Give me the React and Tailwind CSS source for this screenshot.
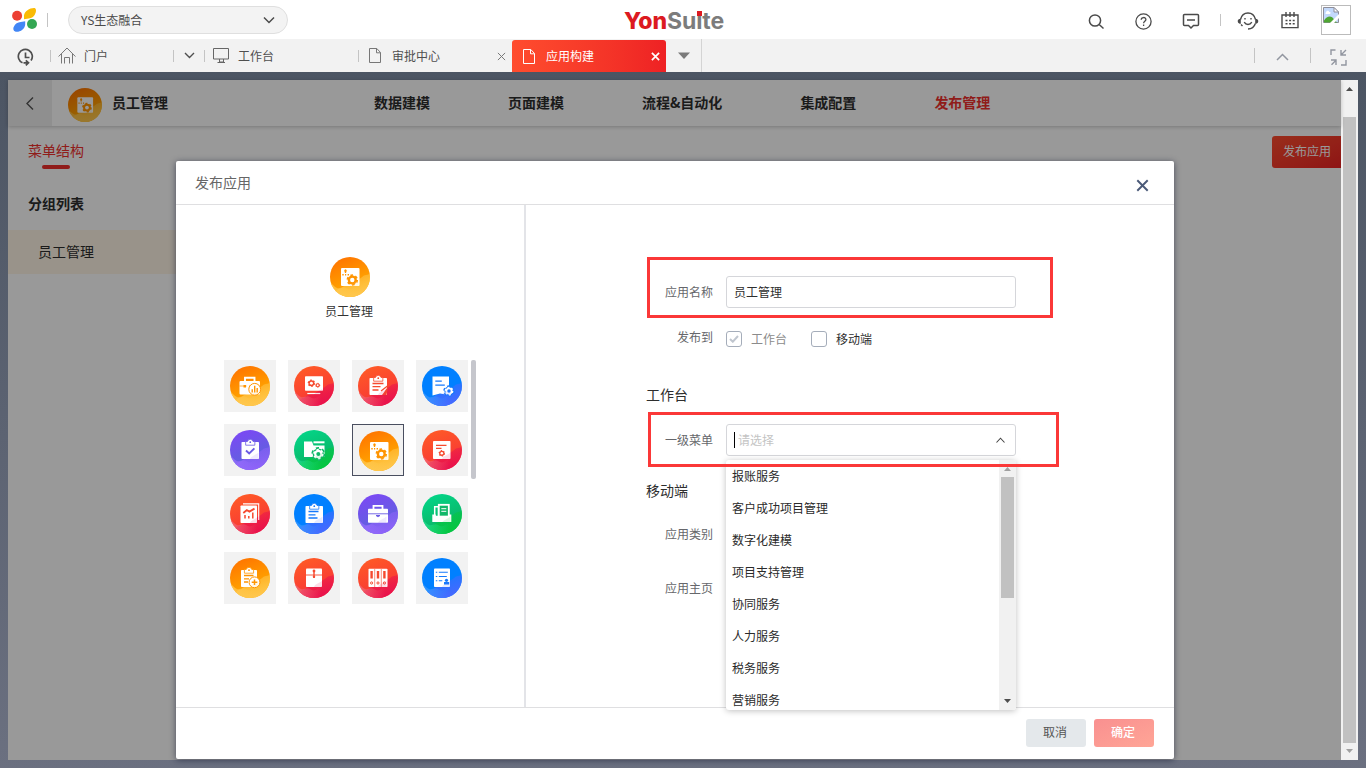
import React from "react";

const SKINS = {
  orange: ["#ff7400", "#ffa800", "#ffc850"],
  red: ["#ff5a26", "#f83a35", "#e8104e"],
  blue: ["#0080ff", "#0080ff", "#4a68ff"],
  purple: ["#7c48f5", "#5f62dd", "#9062fa"],
  green: ["#03d588", "#0bb566", "#05c83e"],
};

const LEFT_WAVE = { orange: "#ffcb55", red: "#f0687a", blue: "#3d9aff", purple: "#9a70ff", green: "#22dd8e" };

function Gear({ x, y, r, fill, hole }) {
  const c = 2 * Math.PI * r;
  return (
    <g>
      <circle cx={x} cy={y} r={r} fill={fill} />
      <circle cx={x} cy={y} r={r} fill="none" stroke={fill} strokeWidth={r * 0.5} strokeDasharray={`${c / 12} ${c / 12}`} />
      <circle cx={x} cy={y} r={r * 0.48} fill={hole} />
    </g>
  );
}

function Board({ children, x = 11.5, w = 17.5, y = 12 }) {
  const c = x + w / 2;
  return (
    <g>
      <rect x={x} y={y} width={w} height="17" rx="0.8" fill="#fff" />
      <path d={`M${c - 4.6} ${y + 3.2}v-3.700h1.800a2.900 2.900 0 0 1 5.600 0h1.800v3.700z`} fill="#fff" stroke="currentColor" strokeWidth="0.8" />
      <circle cx={c} cy={y + 0.2} r="0.9" fill="currentColor" />
      {children}
    </g>
  );
}

const line = { fill: "none", stroke: "currentColor", strokeWidth: 1.3 };

const GLYPHS = {
  caseChart: (
    <g>
      <path d="M15 15.5v-3.700h9.500v3.700" fill="none" stroke="#fff" strokeWidth="1.900" />
      <rect x="9.500" y="15" width="20.500" height="13.500" rx="1" fill="#fff" />
      <path d="M9.500 20h7M19 20h5" {...line} strokeWidth="0.700" />
      <rect x="13.500" y="19" width="2.500" height="2.500" fill="currentColor" />
      <circle cx="24.700" cy="23.300" r="5.900" fill="#fff" stroke="currentColor" strokeWidth="1" />
      <path d="M22.200 26.400v-3.200M24.700 26.400v-6.600M27.200 26.400v-4.400" {...line} strokeWidth="1.400" />
    </g>
  ),
  screen: (
    <g>
      <rect x="11" y="10.300" width="18" height="14.400" rx="0.800" fill="#fff" />
      <Gear x={17.400} y={17.200} r={3} fill="currentColor" hole="#fff" />
      <Gear x={23.700} y={19.300} r={2} fill="currentColor" hole="#fff" />
      <path d="M13.300 27.500h13" stroke="#fff" strokeWidth="1.200" />
    </g>
  ),
  boardEdit: (
    <Board>
      <path d="M14.500 17.500h11M14.500 20.700h8M14.500 24h6" {...line} />
      <path d="M30 20.500 25.500 27 24 29h4.500z" fill="currentColor" />
      <path d="m29.500 20-6.500 5" {...line} />
    </Board>
  ),
  docGear: (
    <g>
      <path d="M10.500 10.500h16.500v18H24l-6-1-7.500 2z" fill="#fff" />
      <path d="M13.300 15.200h6.500M13.300 19.200h9.500" {...line} />
      <Gear x={27} y={25} r={4.600} fill="currentColor" hole="currentColor" />
      <Gear x={27} y={25} r={3.500} fill="#fff" hole="currentColor" />
    </g>
  ),
  boardCheck: (
    <Board>
      <path d="m16 20.500 3.200 3 5.200-5.200" {...line} strokeWidth="1.900" />
    </Board>
  ),
  folderGear: (
    <g>
      <path d="M10 27V11.500h8l1.500 4h11V27z" fill="#fff" />
      <path d="M19.500 12.300h11" stroke="#fff" strokeWidth="2" />
      <Gear x={24.300} y={24} r={5.600} fill="currentColor" hole="currentColor" />
      <Gear x={24.300} y={24} r={4.200} fill="#fff" hole="currentColor" />
    </g>
  ),
  panelGear: (
    <g>
      <rect x="11" y="11" width="18.500" height="18" rx="1" fill="#fff" />
      <path d="M15.500 12.200a1.500 1.500 0 0 1 .5 2.800l.3 1h-1.600l.3-1a1.500 1.500 0 0 1 .5-2.800zM12.300 17h1.400v1.600h-1.400zM15 17h1.200v1.600H15zM17.600 17H19v1.600h-1.400z" fill="currentColor" />
      <Gear x={22.300} y={23} r={4.600} fill="currentColor" hole="#fff" />
    </g>
  ),
  docSmallGear: (
    <g>
      <rect x="11" y="11" width="17.500" height="18" rx="0.800" fill="#fff" />
      <path d="M14 15.300h10.500M14 18.300h5.500" {...line} />
      <Gear x={19.800} y={23.300} r={2.600} fill="currentColor" hole="#fff" />
    </g>
  ),
  sheets: (
    <g>
      <path d="M13 9.900h15.700V26" fill="none" stroke="#fff" strokeWidth="1.100" />
      <rect x="10.500" y="11.500" width="16.500" height="17.500" rx="0.800" fill="#fff" />
      <path d="m13.300 19 3.500-3 2.600 1.600 5.100-3" {...line} strokeWidth="1.800" />
      <path d="M15 24.500v-3.500M18.800 24.500V22M22.800 24.500v-6" {...line} strokeWidth="1.500" />
    </g>
  ),
  boardLines: (
    <Board>
      <path d="M14.500 17.500h10M14.500 20.800h7M14.500 24h9" {...line} />
    </Board>
  ),
  briefcase: (
    <g>
      <path d="M15.500 15.500v-3.700h9v3.700" fill="none" stroke="#fff" strokeWidth="1.800" />
      <rect x="10" y="14.700" width="20" height="14" rx="0.800" fill="#fff" />
      <path d="M10 19.800h20" {...line} strokeWidth="0.900" />
      <path d="M18 21h4v1l-2 1.200-2-1.200z" fill="currentColor" />
    </g>
  ),
  tray: (
    <g>
      <path d="M12.700 22v-9.300h3.800v9.300" fill="none" stroke="#fff" strokeWidth="1.500" />
      <rect x="16.800" y="10.800" width="10" height="12" fill="currentColor" stroke="#fff" strokeWidth="1.800" />
      <path d="M19.300 14.700h5M19.300 17.300h5" stroke="#fff" strokeWidth="1" />
      <path d="M10.300 20.500h3.500v1.200h13v-1.200h2.500v7.500h-19z" fill="#fff" />
    </g>
  ),
  boardPlus: (
    <Board x={11} w={16}>
      <path d="M14 17.500h9.500M14 20.800h5M14 24h4" {...line} />
      <circle cx="24.500" cy="24.300" r="5.400" fill="#fff" stroke="currentColor" strokeWidth="1" />
      <path d="M21.700 24.300h5.600M24.500 21.500v5.600" {...line} strokeWidth="1.500" />
    </Board>
  ),
  box: (
    <g>
      <rect x="12" y="10.500" width="16" height="18.500" rx="0.800" fill="#fff" />
      <path d="M12 17h16" {...line} strokeWidth="0.900" />
      <path d="M20 12.500v7.500" {...line} strokeWidth="1.400" />
      <circle cx="20" cy="13" r="1.400" fill="currentColor" />
      <circle cx="20" cy="18.700" r="1.200" fill="currentColor" />
    </g>
  ),
  binders: (
    <g>
      <rect x="10.500" y="10.800" width="19" height="18.200" rx="0.800" fill="#fff" />
      <path d="M16.700 11v18M23.300 11v18" {...line} strokeWidth="0.600" />
      <path d="M13.600 13v7.500M20 13v7.500M26.400 13v7.500" {...line} strokeWidth="2.400" />
      <circle cx="13.600" cy="25" r="1.100" {...line} strokeWidth="1" />
      <circle cx="20" cy="25" r="1.100" {...line} strokeWidth="1" />
      <circle cx="26.400" cy="25" r="1.100" {...line} strokeWidth="1" />
    </g>
  ),
  listUser: (
    <g>
      <rect x="12" y="10.500" width="16" height="18.500" rx="0.800" fill="#fff" />
      <path d="M13.800 14.300h1.500M13.800 18.500h1.500M13.800 22.700h1.500M16.800 14.300h9M16.800 18.500h8M16.800 22.700h3.500" {...line} strokeWidth="1.100" />
      <circle cx="24.500" cy="22.300" r="1.600" fill="currentColor" />
      <path d="M22 26.500v-2.500h5.200v2.500z" fill="currentColor" />
    </g>
  ),
};

const GLYPH_COLORS = { orange: "#ff9400", red: "#f64a2f", blue: "#1679fb", purple: "#6a5be4", green: "#10b869" };

function AppIcon({ skin, glyph, size = 40, id }) {
  const [from, to, wave] = SKINS[skin];
  return (
    <svg width={size} height={size} viewBox="0 0 40 40" color={GLYPH_COLORS[skin]} className="block shrink-0">
      <defs>
        <linearGradient id={id} x1="0.25" y1="0" x2="0.65" y2="1">
          <stop offset="0" stopColor={from} />
          <stop offset="0.8" stopColor={to} />
        </linearGradient>
        <clipPath id={id + "c"}>
          <circle cx="20" cy="20" r="20" />
        </clipPath>
        <linearGradient id={id + "w"} x1="0" y1="0" x2="0.5" y2="1">
          <stop offset="0" stopColor={wave} stopOpacity="0.15" />
          <stop offset="1" stopColor={wave} stopOpacity="0.95" />
        </linearGradient>
        <linearGradient id={id + "v"} x1="0" y1="0" x2="0.8" y2="0">
          <stop offset="0" stopColor={LEFT_WAVE[skin]} stopOpacity="0.85" />
          <stop offset="1" stopColor={LEFT_WAVE[skin]} stopOpacity="0" />
        </linearGradient>
      </defs>
      <g clipPath={`url(#${id}c)`}>
        <rect width="40" height="40" fill={`url(#${id})`} />
        <path d="M8 32c4 0 5-4 10-4 5-1 7-4 11-6 3-1 4-4 7-4 2 0 3-1 4-2v24H0z" fill={`url(#${id}w)`} />
        <path d="M0 26c3 1 4 4 7 5s6-2 9 0 5 2 9-1c3-1 6-1 9-3v13H0z" fill={`url(#${id}v)`} />
      </g>
      {GLYPHS[glyph]}
      <path d="M20 29c1-3 4-3 8.500-6.500V29z" fill={wave} opacity="0.14" />
    </svg>
  );
}

const TILES = [
  ["orange", "caseChart"], ["red", "screen"], ["red", "boardEdit"], ["blue", "docGear"],
  ["purple", "boardCheck"], ["green", "folderGear"], ["orange", "panelGear"], ["red", "docSmallGear"],
  ["red", "sheets"], ["blue", "boardLines"], ["purple", "briefcase"], ["green", "tray"],
  ["orange", "boardPlus"], ["red", "box"], ["red", "binders"], ["blue", "listUser"],
];

const OPTIONS = ["报账服务", "客户成功项目管理", "数字化建模", "项目支持管理", "协同服务", "人力服务", "税务服务", "营销服务"];

function Svg({ w, h, vb, children, className = "", sw = 1.5 }) {
  return (
    <svg width={w} height={h} viewBox={vb || `0 0 ${w} ${h}`} fill="none" stroke="currentColor" strokeWidth={sw} className={`block shrink-0 ${className}`}>
      {children}
    </svg>
  );
}

function Close({ size, sw, className }) {
  return (
    <Svg w={size} h={size} vb="0 0 10 10" sw={sw} className={className}>
      <path d="m1 1 8 8M9 1 1 9" />
    </Svg>
  );
}

function PageIcon({ className }) {
  return (
    <Svg w={12} h={15} sw={1} className={className}>
      <path d="M.5.5h7.300l3.700 4v10H.5zM7.500.5v4.300h4" />
    </Svg>
  );
}

function Divider({ className }) {
  return <div className={`h-3 w-px shrink-0 bg-[#c4c4c4] ${className || ""}`} />;
}

function TopBar() {
  return (
    <header className="relative flex h-[39px] shrink-0 items-center bg-white text-[#4a4a4a]">
      <svg width="26" height="25" viewBox="0 0 26 25" className="ml-[12px] block">
        <circle cx="5.1" cy="8.8" r="5" fill="#ec4034" />
        <path d="M12 12.3V8.5C12.5 4.3 17.5 1 22 1c2 0 2.400 2.400 1.700 4.400-1 3.800-4 5.800-7 6.200z" fill="#fabb05" />
        <circle cx="20" cy="17" r="5" fill="#34a753" />
        <path d="M13.200 14.300v3.200c-.3 4.500-4.500 7.300-8.500 7.300-3 0-4-2.500-3-4.800 1.500-3.400 4-4.600 7-5z" fill="#4286f5" />
      </svg>
      <Divider className="ml-[9px] h-[14px]" />
      <div className="ml-5 flex h-7 w-[220px] items-center justify-between rounded-full border border-[#dfdfdf] bg-[#f3f3f3] pl-3 pr-[12px]">
        <span className="text-[12px] leading-none">YS生态融合</span>
        <Svg w={12} h={8} sw={1.5}><path d="m1 1.500 5 5 5-5" /></Svg>
      </div>
      <div className="absolute left-[624px] top-[8px] flex font-['Inter'] text-[23px] font-extrabold leading-[26px] tracking-[-0.1px]">
        <span className="text-[#dc1a21]">Yon</span>
        <span className="font-bold text-[#7c7c7c]">Su</span>
        <span className="relative font-bold text-[#7c7c7c]">i<i className="absolute left-[1px] top-[3px] h-[5px] w-[5px] bg-[#dc1a21]" /></span>
        <span className="font-bold text-[#7c7c7c]">te</span>
      </div>
      <div className="ml-auto flex items-center pr-[15px]">
        <Svg w={16} h={16} className="mr-[31px] mt-[4px]"><circle cx="7" cy="6.500" r="5.600" /><path d="m11.200 10.500 4.300 4" /></Svg>
        <Svg w={17} h={17} sw={1.300} className="mr-[30px] mt-[3px]"><circle cx="8.500" cy="8.500" r="7.600" /><path d="M6.200 6.800c0-3 4.700-3 4.700-.2 0 1.700-2.300 1.800-2.300 3.700M8.600 11.500V13" /></Svg>
        <Svg w={18} h={17} className="mr-[20px] mt-[4px]"><path d="M2.500 1.500h13a1 1 0 0 1 1 1v9a1 1 0 0 1-1 1h-4L9 15l-2.500-2.500h-4a1 1 0 0 1-1-1v-9a1 1 0 0 1 1-1zM5 7h8" /></Svg>
        <Divider className="mr-[16px]" />
        <Svg w={22} h={18} sw={1.400} className="mr-[22px] mt-[2px]">
          <path d="M3.500 7.500C4.500 3.500 7.500 1 11 1s6.500 2.500 7.500 6.500M18.400 11.500c-1.200 3.500-4 5.500-7.400 5.500M4 12.500 5.500 14M7.200 10.200c1.800 3 5.800 3 7.600 0" />
          <path d="M3.800 6.800c-2.600 0-3.400 1.500-3 3 .3 1.400 1.500 2 3 2zM18.200 6.800c2.600 0 3.400 1.500 3 3-.3 1.400-1.500 2-3 2z" fill="currentColor" stroke="none" />
          <path d="M8 6v1.500M14 6v1.500" />
        </Svg>
        <Svg w={18} h={17} sw={1.400} className="mr-[22px] mt-px">
          <path d="M1 3h16v12.600H1zM5 0v5M9 0v5M13 0v5" />
          <path d="M4.500 8.500h9.500M4.500 11.800h9.500" strokeDasharray="2 1.600" />
        </Svg>
        <div className="mt-px h-[30px] w-[30px] border border-[#bbb] bg-white p-px">
          <svg width="16" height="16" viewBox="0 0 16 16" className="block">
            <path d="M.5.500h10.500l4.500 4.500v10.500H.500z" fill="#c3d9fb" stroke="#8e8e9a" />
            <path d="M3 5.500c0-2 3-2.200 3.200-.5 1.800-.3 2 1.800.5 1.900H3.200C2.200 6.800 2 5.600 3 5.500z" fill="#fff" />
            <path d="M1 15.500v-2c3-5 8-5 10-1l3 3z" fill="#4ea632" />
            <path d="M11 .500v4.500h4.500z" fill="#fff" stroke="#8e8e9a" />
            <path d="m16 7-9 9h4l5-5z" fill="#fff" />
          </svg>
        </div>
      </div>
    </header>
  );
}

function TabBar() {
  return (
    <nav className="flex h-[33px] shrink-0 items-center bg-[#f2f2f2] text-[12px] text-[#4f4f4f]">
      <Svg w={17} h={19} sw={1.700} className="ml-[17px] mt-[4px]">
        <path d="M5.500 14.800A7 7 0 1 1 14 12.500M8.500 4.500v5h4M6.500 14.800h4.500M8.800 12.300l2.700 2.500-2.700 2.500" />
      </Svg>
      <Divider className="ml-[16px]" />
      <Svg w={18} h={17} sw={1} className="ml-[7px] text-[#777]">
        <path d="M.6 9.500 9 1l8.400 8.500M3.500 7v9.500M14.500 7v9.500M6.500 16.500v-6h5v6" />
      </Svg>
      <span className="ml-[8px] w-[89px]">门户</span>
      <Divider />
      <Svg w={11} h={7} className="ml-[10px] mr-[9px]" sw={1.400}><path d="m1 1 4.500 4.500L10 1" /></Svg>
      <Divider />
      <Svg w={17} h={15} sw={1} className="ml-[8px] text-[#666]"><path d="M.500.500h15v10.500H.500zM6.500 11v3h4v-3M4.500 14.500h7.500" /></Svg>
      <span className="ml-[8px] w-[120px]">工作台</span>
      <Divider />
      <PageIcon className="ml-[10px] text-[#777]" />
      <span className="ml-[11px] w-[105px]">审批中心</span>
      <Close size={9} sw={1.100} className="mr-[6px] mt-px text-[#777]" />
      <div className="mt-px flex h-8 w-[154px] items-center rounded-t-[3px] bg-gradient-to-r from-[#ff4c2e] to-[#ee2124] text-white">
        <PageIcon className="ml-[11px]" />
        <span className="ml-[11px] w-[105px]">应用构建</span>
        <Close size={9} sw={1.900} className="mt-px" />
      </div>
      <div className="flex h-full w-9 items-center justify-center border-r border-[#d4d4d4]">
        <svg width="12" height="7" className="block"><path d="M0 .500h12L6 7z" fill="#7b7b7b" /></svg>
      </div>
      <div className="ml-auto flex items-center pr-[19px] text-[#9296a0]">
        <Divider className="h-[15px]" />
        <Svg w={13} h={8} className="ml-[21px] mr-[21px] mt-[2px]"><path d="m1 7 5.500-5.500L12 7" /></Svg>
        <Divider className="h-[15px]" />
        <Svg w={17} h={17} sw={1.400} className="ml-[19px] mt-[4px]">
          <path d="M1 6V1h4.500M16 1l-4.500 4.500M11 1v5h5M1 11h5v5M1.500 15.700l4.500-4.500M11 16h5v-5" />
        </Svg>
      </div>
    </nav>
  );
}

function Workspace() {
  return (
    <div className="flex h-full flex-col bg-white">
      <div className="flex h-[46px] shrink-0 items-center text-[14px] font-bold text-[#2e2e2e] shadow-[0_1px_4px_rgba(0,0,0,0.22)]">
        <div className="flex h-full w-11 items-center justify-center bg-[#efefef] text-[#555]">
          <Svg w={8} h={13} sw={1.400}><path d="m7 .500-6 6 6 6" /></Svg>
        </div>
        <div className="ml-4 mt-[3px]"><AppIcon skin="orange" glyph="panelGear" size={34} id="head" /></div>
        <span className="mb-[2px] ml-[10px] w-[263px]">员工管理</span>
        <div className="mb-[2px] flex gap-[78px] whitespace-nowrap">
          <span className="-ml-px">数据建模</span>
          <span>页面建模</span>
          <span>流程&amp;自动化</span>
          <span>集成配置</span>
          <span className="text-[#f0302c]">发布管理</span>
        </div>
      </div>
      <div className="flex flex-1 justify-between text-[14px]">
        <div className="w-[168px] leading-[20px] text-[#2e2e2e]">
          <div className="ml-5 mt-[14px] w-14 text-[#f0302c]">菜单结构
            <div className="mx-auto mt-[5px] h-1 w-7 rounded-full bg-[#f0302c]" />
          </div>
          <div className="ml-5 mt-[24px] font-bold">分组列表</div>
          <div className="mt-[17px] flex h-11 items-center bg-[#fff6e6] pb-[2px] pl-[30px]">员工管理</div>
        </div>
        <div className="mt-[10px] flex h-8 w-[69px] items-center whitespace-nowrap rounded-l-[3px] bg-gradient-to-br from-[#ff4c2e] to-[#ee2124] pb-[2px] pl-[11px] text-[12px] text-white">发布应用</div>
      </div>
    </div>
  );
}

function ScrollArrow({ up, className }) {
  return (
    <svg width="7" height="4" className={`block ${className}`}>
      <path d={up ? "M0 4 3.500 0 7 4z" : "M0 0h7L3.500 4z"} fill="currentColor" />
    </svg>
  );
}

function IconPicker() {
  return (
    <div className="flex w-[350px] shrink-0 flex-col items-center border-r-2 border-[#e3e4e8] pt-[52px]">
      <AppIcon skin="orange" glyph="panelGear" id="chosen" />
      <span className="mr-[2px] mt-[5px] text-[12px] leading-[18px] text-[#333]">员工管理</span>
      <div className="mt-10 flex w-[252px] justify-between">
        <div className="grid w-[244px] grid-cols-4 gap-3">
          {TILES.map(([skin, glyph], i) => (
            <div key={i} className={`h-[52px] w-[52px] bg-[#f2f2f2] pl-[6px] pt-[6px] ${i === 6 ? "border border-[#4a4f60]" : ""}`}>
              <AppIcon skin={skin} glyph={glyph} id={`t${i}`} />
            </div>
          ))}
        </div>
        <div className="h-[119px] w-[5px] rounded-[2px] bg-[#c5c6cc]" />
      </div>
    </div>
  );
}

function Label({ children, className = "" }) {
  return <span className={`w-[189px] pr-[2px] text-right text-[12px] leading-[18px] text-[#66676b] ${className}`}>{children}</span>;
}

function PublishForm() {
  return (
    <div className="flex-1 text-[12px] text-[#2e2e2e]">
      <div className="mt-[71px] flex h-8 items-center">
        <Label>应用名称</Label>
        <div className="ml-[11px] flex h-8 w-[290px] items-center rounded-[3px] border border-[#d5d6da] pl-[7px]">员工管理</div>
      </div>
      <div className="mt-[19px] flex h-[20px] items-center">
        <Label>发布到</Label>
        <div className="ml-[11px] mt-[3px] flex items-center">
          <div className="flex h-4 w-4 items-center justify-center rounded-[3px] border border-[#a5adba]">
            <Svg w={10} h={8} sw={2} className="text-[#c0c6cf]"><path d="m1 4 2.800 2.700L9 1" /></Svg>
          </div>
          <span className="ml-2 w-[61px] pl-px text-[#8b8b8b]">工作台</span>
          <div className="h-4 w-4 rounded-[3px] border border-[#a5adba]" />
          <span className="ml-2 pl-px">移动端</span>
        </div>
      </div>
      <div className="ml-[120px] mt-[37px] text-[14px] leading-[20px]">工作台</div>
      <div className="mt-[20px] flex h-8 items-center">
        <Label>一级菜单</Label>
        <div className="ml-[11px] flex h-8 w-[290px] items-center rounded-[3px] border border-[#d5d6da] pl-[7px] pr-[10px]">
          <div className="h-4 w-px bg-black" />
          <span className="ml-[3px] flex-1 text-[#c4c4c4]">请选择</span>
          <Svg w={9} h={6} sw={1.100} className="text-[#444]"><path d="m.5 5.500 4-4.300 4 4.300" /></Svg>
        </div>
      </div>
      <div className="ml-[120px] mt-[24px] text-[14px] leading-[20px]">移动端</div>
      <div className="mt-[25px] flex"><Label>应用类别</Label></div>
      <div className="mt-[36px] flex"><Label>应用主页</Label></div>
    </div>
  );
}

function MenuDropdown() {
  return (
    <div className="absolute left-[726px] top-[460px] flex h-[250px] w-[290px] overflow-hidden rounded-[3px] bg-white shadow-[0_1px_6px_rgba(0,0,0,0.25)]">
      <ul className="flex-1 text-[12px] text-[#2a2a2a]">
        {OPTIONS.map((o) => (
          <li key={o} className="flex h-8 items-center pl-[6px]">{o}</li>
        ))}
      </ul>
      <div className="flex w-[17px] flex-col items-center bg-[#f1f1f1] pb-[7px] pt-[7px]">
        <ScrollArrow up className="text-[#a0a0a0]" />
        <div className="mt-[6px] h-[121px] w-[13px] bg-[#c1c1c1]" />
        <ScrollArrow className="mt-auto text-[#4d4d4d]" />
      </div>
    </div>
  );
}

function PublishDialog() {
  return (
    <section className="absolute left-[176px] top-[161px] flex h-[598px] w-[998px] flex-col rounded-[2px] bg-white shadow-[0_1px_6px_rgba(20,25,50,0.6)]">
      <div className="flex h-11 shrink-0 items-center justify-between border-b border-[#dfdfe1] pl-[19px] pr-[25px]">
        <h2 className="text-[14px] text-[#666]">发布应用</h2>
        <Close size={13} sw={1.500} className="mt-[5px] text-[#4b5a78]" />
      </div>
      <div className="flex min-h-0 flex-1">
        <IconPicker />
        <PublishForm />
      </div>
      <div className="flex h-[52px] shrink-0 justify-end gap-2 border-t border-[#dfdfe1] pr-5 pt-[11px] text-[12px]">
        <div className="flex h-7 w-[60px] items-center justify-center rounded-[3px] bg-[#e4e8eb] pb-[2px] pr-[2px] text-[#555]">取消</div>
        <div className="flex h-7 w-[60px] items-center justify-center rounded-[3px] bg-gradient-to-br from-[#f99090] to-[#ffa596] pb-[2px] pr-[2px] font-medium text-white">确定</div>
      </div>
    </section>
  );
}

export default function App() {
  return (
    <div className="relative flex h-[768px] w-[1366px] flex-col overflow-hidden font-['Noto_Sans_CJK_SC',sans-serif]">
      <TopBar />
      <TabBar />
      <div className="flex flex-1 bg-gradient-to-b from-[#4c5563] to-[#6b7080] p-2">
        <main className="relative flex-1">
          <Workspace />
          <div className="absolute inset-0 bg-black/40" />
        </main>
        <div className="flex w-[17px] flex-col items-center bg-[#f1f1f1] py-[7px]">
          <ScrollArrow up className="text-[#4d4d4d]" />
          <div className="mt-[26px] h-[626px] w-[13px] bg-[#c1c1c1]" />
          <ScrollArrow className="mt-auto text-[#a0a0a0]" />
        </div>
      </div>
      <PublishDialog />
      <MenuDropdown />
      <div className="absolute left-[647px] top-[257px] h-[61px] w-[406px] border-[3px] border-[#fb3838]" />
      <div className="absolute left-[648px] top-[412px] h-[55px] w-[411px] border-[3px] border-[#fb3838]" />
    </div>
  );
}
